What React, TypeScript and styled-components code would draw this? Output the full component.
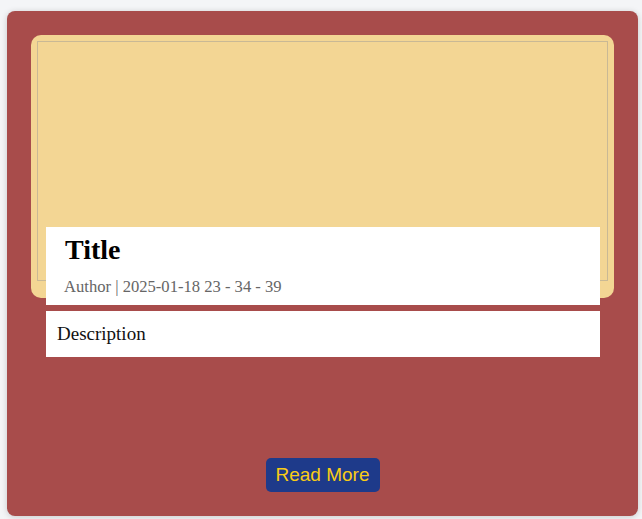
import React from "react";
import styled, { createGlobalStyle } from "styled-components";

const Global = createGlobalStyle`
  html, body { margin: 0; padding: 0; background: #f4f5f7; }
  body { font-family: "Liberation Serif", "Times New Roman", serif; }
  * { box-sizing: border-box; }
`;

const Page = styled.div`
  padding: 11px 4px 3px 7px;
`;

const Card = styled.article`
  height: 505px;
  background: #a84c4b;
  border-radius: 8px;
  box-shadow: 0 1px 6px rgba(0, 0, 0, 0.18);
  padding: 24px;
  display: flex;
  flex-direction: column;
`;

const ImageFrame = styled.div`
  height: 263px;
  background: #f3d694;
  border-radius: 10px;
  padding: 6px 6px 17px;
`;

const ImagePlaceholder = styled.div`
  height: 240px;
  border: 1px solid rgba(150, 150, 150, 0.45);
`;

const Info = styled.header`
  position: relative;
  margin: -71px 14px 0 15px;
  background: #fff;
  padding: 7px 18px 8px;
`;

const Title = styled.h2`
  margin: 0;
  padding-left: 1px;
  font-size: 28px;
  font-weight: 700;
  line-height: normal;
  color: #000;
`;

const Meta = styled.p`
  margin: 11px 0 0;
  font-size: 16.6px;
  line-height: normal;
  color: #666;
`;

const Description = styled.p`
  margin: 6px 14px 0 15px;
  background: #fff;
  padding: 12px 12px 12px 11px;
  font-size: 19px;
  line-height: 22px;
  color: #111;
`;

const Footer = styled.div`
  margin-top: auto;
  display: flex;
  justify-content: center;
`;

const ReadMore = styled.button`
  background: #1e3a8a;
  color: #facc15;
  border: none;
  border-radius: 5px;
  padding: 6px 10px;
  font-family: "Liberation Sans", Arial, sans-serif;
  font-size: 19px;
  line-height: 22px;
  cursor: pointer;
`;

export default function App() {
  return (
    <>
      <Global />
      <Page>
        <Card>
          <ImageFrame>
            <ImagePlaceholder />
          </ImageFrame>
          <Info>
            <Title>Title</Title>
            <Meta>Author | 2025-01-18 23 - 34 - 39</Meta>
          </Info>
          <Description>Description</Description>
          <Footer>
            <ReadMore>Read More</ReadMore>
          </Footer>
        </Card>
      </Page>
    </>
  );
}
